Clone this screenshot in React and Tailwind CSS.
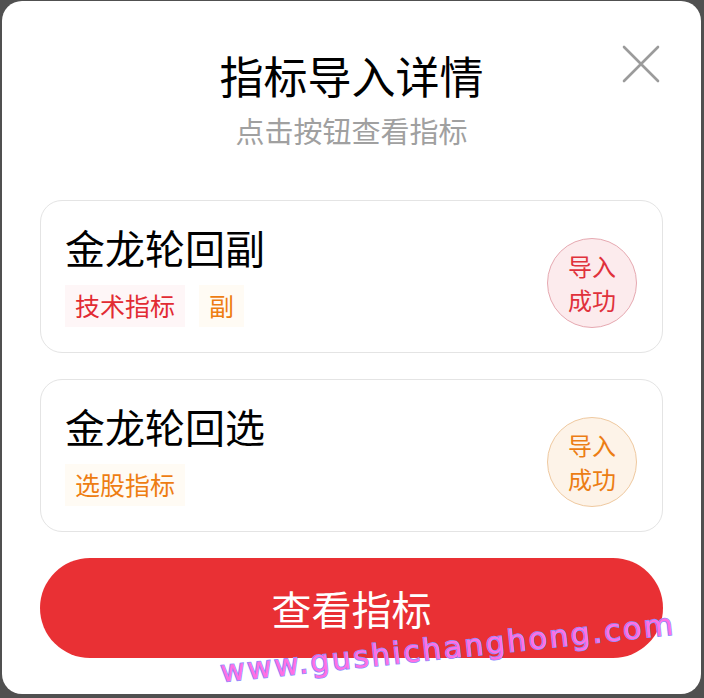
import React from 'react';

const cjk = { fontFamily: '"Noto Sans CJK SC", "Noto Sans", sans-serif' };

const items = [
    {
        name: '金龙轮回副',
        tags: [
            { label: '技术指标', tone: 'red' },
            { label: '副', tone: 'orange' },
        ],
        tone: 'red',
    },
    {
        name: '金龙轮回选',
        tags: [{ label: '选股指标', tone: 'orange' }],
        tone: 'orange',
    },
];

const tagStyles = {
    red: 'bg-[#fef6f7] text-[#e22b33]',
    orange: 'bg-[#fffbf4] text-[#ee7d12]',
};

const badgeStyles = {
    red: 'bg-[#fcebed] border-[#e6a9b1] text-[#e0313b]',
    orange: 'bg-[#fdf3e8] border-[#efc9a0] text-[#ec7d14]',
};

const ResultCard = ({ name, tags, tone }) => (
    <div className="h-[153px] rounded-[22px] border border-[#e4e4e4] flex items-center justify-between pl-6 pr-[25px]">
        <div className="flex flex-col">
            <div className="text-[40px] leading-[40px] text-black">{name}</div>
            <div className="mt-[18px] flex gap-[14px]">
                {tags.map((t) => (
                    <span
                        key={t.label}
                        className={`h-[42px] px-[10px] flex items-center text-[25px] leading-none ${tagStyles[t.tone]}`}
                    >
                        {t.label}
                    </span>
                ))}
            </div>
        </div>
        <div
            className={`mt-3 w-[90px] h-[90px] rounded-full border flex flex-col items-center justify-center text-[24px] leading-[34px] ${badgeStyles[tone]}`}
        >
            <span>导入</span>
            <span>成功</span>
        </div>
    </div>
);

export default function App() {
    return (
        <div className="w-[704px] h-[698px] bg-[#505050] pt-px pl-[2px] overflow-hidden" style={cjk}>
            <div className="relative w-[699px] h-[693px] bg-white rounded-[20px] px-[38px] pt-[52px]">
                {/* close */}
                <button className="absolute left-[620px] top-[44px] w-[38px] h-[38px] text-[#9b9b9b]">
                    <svg viewBox="0 0 38 38" width="38" height="38" fill="none" stroke="currentColor" strokeWidth="2.6" strokeLinecap="round">
                        <path d="M2 2 L36 36 M36 2 L2 36" />
                    </svg>
                </button>

                <div className="text-center text-[44px] leading-[44px] text-black">指标导入详情</div>
                <div className="mt-[18px] text-center text-[29px] leading-[30px] text-[#a0a0a0]">点击按钮查看指标</div>

                <div className="mt-[55px] flex flex-col gap-[26px]">
                    {items.map((it) => (
                        <ResultCard key={it.name} {...it} />
                    ))}
                </div>

                <button className="mt-[26px] w-full h-[100px] rounded-full bg-[#e93034] text-white text-[40px] leading-none">
                    查看指标
                </button>

                {/* watermark */}
                <div
                    className="absolute left-[220px] top-[656px] text-[30px] leading-[30px] tracking-[2.5px] text-[#ff70e4] -rotate-6 origin-bottom-left pointer-events-none whitespace-nowrap [-webkit-text-stroke:1.6px_#8c8cff] [paint-order:stroke_fill]"
                    style={{ fontFamily: '"DejaVu Sans", sans-serif' }}
                >
                    www.gushichanghong.com
                </div>
            </div>
        </div>
    );
}
